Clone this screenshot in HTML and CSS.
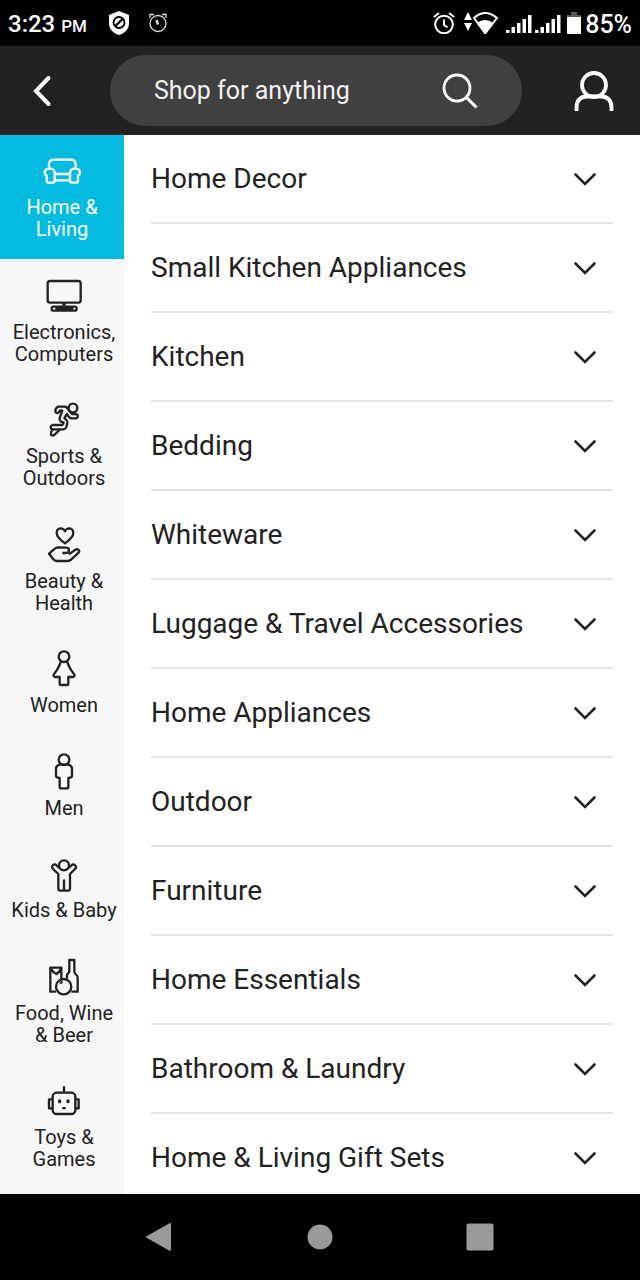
FILE: index.html
```html
<!DOCTYPE html>
<html lang="en">
<head>
<meta charset="utf-8">
<meta name="viewport" content="width=device-width, initial-scale=1">
<title>Shop by category</title>
<link rel="stylesheet" href="styles.css">
</head>
<body>
<svg class="sprite" aria-hidden="true">
  <symbol id="chevron" viewBox="0 0 24 24"><path d="M2.500 7.500 12 17l9.500-9.500" fill="none" stroke="currentColor" stroke-width="2.600" stroke-linecap="round"/></symbol>
  <symbol id="signal" viewBox="0 0 26 20"><path d="M0 15h3.500v3H0zM5.500 12H9v6H5.500zM11 8h3.500v10H11zM16.500 4H20v14h-3.500zM22 0h3.500v18H22z" fill="currentColor"/></symbol>
</svg>

<div class="status">
  <div class="status-group">
    <span class="time">3:23 <small>PM</small></span>
    <svg class="shield" viewBox="0 0 20 24"><path d="M10 0 20 4v8c0 6-4 10-10 12C4 22 0 18 0 12V4z" fill="#fff"/><circle cx="10" cy="11.500" r="5.500" fill="none" stroke="#000" stroke-width="1.800"/><path d="m6.500 15 7-7" stroke="#000" stroke-width="2.400"/></svg>
    <svg class="clock-small" viewBox="0 0 18 20" fill="none" stroke="#ddd" stroke-width="1.300"><circle cx="9" cy="10.500" r="8"/><path d="M1 5V1.500h4M17 5V1.500h-4"/><path d="M9 11.500 7.500 7" stroke-width="2.400"/></svg>
  </div>
  <div class="status-group status-right">
    <svg class="clock" viewBox="0 0 22 22" fill="none" stroke="#fff" stroke-width="2"><circle cx="11" cy="12.500" r="8.800"/><path d="M.8 5 6 1M21.200 5 16 1"/><path d="M11 7.500v5.500l3.500 2.500"/></svg>
    <svg class="wifi" viewBox="0 0 36 22"><path d="m4 0 4 8H0zM0 11h8l-4 8z" fill="#fff"/><path d="M21 21 10 6Q21-4 33 6L21.500 21Z" fill="none" stroke="#fff" stroke-width="2"/><path d="M21 22 12.500 11q8.500-6 17 0z" fill="#fff"/></svg>
    <svg class="signal"><use href="#signal"/></svg>
    <svg class="signal"><use href="#signal"/></svg>
    <svg class="battery" viewBox="0 0 14 22"><path d="M4 0h6v3h4v2H0V3h4z" fill="#555"/><path d="M0 5h14v17H0z" fill="#fff"/></svg>
    <span class="percent">85%</span>
  </div>
</div>

<header class="topbar">
  <button class="back" type="button" aria-label="Back"><svg viewBox="0 0 20 32"><path d="M16.500 3 4 16l12.500 13" fill="none" stroke="#fff" stroke-width="4" stroke-linecap="round"/></svg></button>
  <form class="search">
    <input type="text" placeholder="Shop for anything" aria-label="Shop for anything">
    <button type="submit" aria-label="Search"><svg viewBox="0 0 36 36" fill="none" stroke="#fff" stroke-width="2.800"><circle cx="15" cy="15" r="13"/><path d="m24.500 24.500 10 10" stroke-width="3"/></svg></button>
  </form>
  <button class="account" type="button" aria-label="Account"><svg viewBox="0 0 40 42" fill="none" stroke="#fff" stroke-width="3.800"><circle cx="20" cy="15" r="12"/><path d="M2.500 41v-3q0-11 10-11.500h15q10 .5 10 11.500v3"/></svg></button>
</header>

<main class="shop">
  <nav class="categories" aria-label="Categories">
    <a class="category active" href="#home" aria-current="page">
      <svg viewBox="126 45 120 120"><path d="M147 93v-8q1-14 14-14h52q13 0 14 14v8M164 112q0-14-15-15-15 1-15 13 0 5 6 9v14q0 7 5 7h14q5 0 5-7zM210 112q0-14 15-15 15 1 15 13 0 5-6 9v14q0 7-5 7h-14q-5 0-5-7zM164 114h46M164 133h46"/></svg>
      <span>Home &amp; Living</span></a>
    <a class="category" href="#electronics">
      <svg viewBox="132 418 120 120"><rect x="143" y="433" width="99" height="65" rx="7"/><path d="M192 499v10" stroke-width="10"/><rect x="155" y="510" width="75" height="12" rx="6"/><path d="M166 516h54" stroke-width="12"/></svg>
      <span>Electronics, Computers</span></a>
    <a class="category" href="#sports">
      <svg viewBox="132 30 120 120"><circle cx="219" cy="54" r="13"/><path d="M205 60q-3-10-12-10h-18q-9 4-9 13 1 7 7 6 5-2 7-8l7 1-8 22q-2 6 3 10l9 4-4 7h-29q-8 3-5 10 2 3 7 3h31q6-1 8-7l3-13q1-5-4-9l-5-5 8-12 5 8q3 5 9 5h13q7-2 5-9-2-4-8-4h-9l-11-12"/><path d="M158 118q-8 13-4 17 6 4 12-3l14-14"/></svg>
      <span>Sports &amp; Outdoors</span></a>
    <a class="category" href="#beauty">
      <svg viewBox="132 402 120 120"><path d="M195 457q-25-18-25-31 0-13 12-14 9 0 13 9 4-9 13-9 12 1 12 14 0 13-25 31zM187 486h12q8-1 8-9-1-7-9-7l-24-1q-7 0-13 7l-14 12 13 17q4 5 10 5h32q7 0 12-5l22-20q4-6-1-9-5-3-10 1l-18 13"/></svg>
      <span>Beauty &amp; Health</span></a>
    <a class="category" href="#women">
      <svg viewBox="132 27 120 120"><circle cx="192" cy="50" r="16"/><path d="M183 64q-4 13-13 27l-9 13q-2 6 4 7h14v20q0 4 5 4h16q5 0 5-4v-20h14q6-1 4-7l-9-13q-9-14-13-27"/></svg>
      <span>Women</span></a>
    <a class="category" href="#men">
      <svg viewBox="132 333 120 120"><circle cx="192" cy="356" r="16"/><path d="M180 371q-12 2-12 14v19q0 6 11 7v26q0 5 5 5h16q5 0 5-5v-26q11-1 11-7v-19q0-12-12-14z"/></svg>
      <span>Men</span></a>
    <a class="category" href="#kids">
      <svg viewBox="132 39 120 120"><circle cx="192" cy="73" r="15"/><path d="M178 81l-11-10q-6-3-10 4-2 5 2 9l16 15v43q0 7 6 7h6q5 0 5-6v-25 25q0 6 5 6h7q6 0 6-7V99l15-15q5-4 2-9-4-7-10-4l-11 10"/></svg>
      <span>Kids &amp; Baby</span></a>
    <a class="category" href="#food">
      <svg viewBox="132 345 120 120"><circle cx="191" cy="434" r="23"/><path d="M168 449h-17v-72h33v34M152 379l8 11 9 6 8-6 7-11M201 410v-12l7-9v-35h15v35q1 7 8 12 2 2 2 8v40h-19M181 425q2-5 7-5"/></svg>
      <span>Food, Wine &amp; Beer</span></a>
    <a class="category" href="#toys">
      <svg viewBox="132 90 120 120"><rect x="158" y="125" width="68" height="64" rx="12"/><path d="M192 106v18M156 145h-9v27h9M228 145h8v27h-8"/><path d="M179 150v2M204 150v2" stroke-width="10" stroke-linecap="round"/><path d="M190 171.500h4" stroke-linecap="round"/></svg>
      <span>Toys &amp; Games</span></a>
  </nav>

  <ul class="sections">
    <li><button type="button" aria-expanded="false">Home Decor<svg><use href="#chevron"/></svg></button></li>
    <li><button type="button" aria-expanded="false">Small Kitchen Appliances<svg><use href="#chevron"/></svg></button></li>
    <li><button type="button" aria-expanded="false">Kitchen<svg><use href="#chevron"/></svg></button></li>
    <li><button type="button" aria-expanded="false">Bedding<svg><use href="#chevron"/></svg></button></li>
    <li><button type="button" aria-expanded="false">Whiteware<svg><use href="#chevron"/></svg></button></li>
    <li><button type="button" aria-expanded="false">Luggage &amp; Travel Accessories<svg><use href="#chevron"/></svg></button></li>
    <li><button type="button" aria-expanded="false">Home Appliances<svg><use href="#chevron"/></svg></button></li>
    <li><button type="button" aria-expanded="false">Outdoor<svg><use href="#chevron"/></svg></button></li>
    <li><button type="button" aria-expanded="false">Furniture<svg><use href="#chevron"/></svg></button></li>
    <li><button type="button" aria-expanded="false">Home Essentials<svg><use href="#chevron"/></svg></button></li>
    <li><button type="button" aria-expanded="false">Bathroom &amp; Laundry<svg><use href="#chevron"/></svg></button></li>
    <li><button type="button" aria-expanded="false">Home &amp; Living Gift Sets<svg><use href="#chevron"/></svg></button></li>
  </ul>
</main>

<footer class="system-nav">
  <button type="button" aria-label="System back"><svg viewBox="0 0 30 30"><path d="M25 2v26L2 15z" fill="#999" stroke="#999" stroke-width="2" stroke-linejoin="round"/></svg></button>
  <button type="button" aria-label="System home"><svg viewBox="0 0 30 30"><circle cx="15" cy="15" r="12.500" fill="#999"/></svg></button>
  <button type="button" aria-label="Recent apps"><svg viewBox="0 0 30 30"><rect x="1.500" y="1.500" width="27" height="27" rx="2" fill="#999"/></svg></button>
</footer>
</body>
</html>
```
FILE: styles.css
```css
* { box-sizing: border-box; }

body {
  margin: 0;
  height: 100vh;
  display: flex;
  flex-direction: column;
  background: #fff;
  color: #222;
  font-family: Roboto, "Liberation Sans", sans-serif;
}

button {
  border: 0;
  padding: 0;
  background: none;
  color: inherit;
  font: inherit;
}

svg { display: block; flex: none; }
.sprite { position: absolute; width: 0; height: 0; }

.status {
  flex: none;
  height: 46px;
  padding: 0 8px;
  display: flex;
  align-items: center;
  justify-content: space-between;
  background: #000;
  color: #fff;
}
.status-group { display: flex; align-items: center; }
.time, .percent { padding-top: 4px; font-weight: 500; line-height: 30px; }
.time { font-size: 24px; }
.percent { font-size: 25px; }
.time small { font-size: 17px; }
.shield { width: 20px; height: 24px; margin-left: 22px; }
.clock-small { width: 18px; height: 20px; margin-left: 20px; }
.clock { width: 22px; height: 22px; margin-right: 9px; }
.wifi { width: 36px; height: 22px; margin-right: 6px; }
.signal { width: 26px; height: 20px; margin: 4px 3px 0 0; }
.battery { width: 14px; height: 22px; margin: 0 4px 0 3px; }

.topbar {
  flex: none;
  height: 89px;
  padding: 0 26px 0 32px;
  display: flex;
  align-items: center;
  background: #222;
}
.back svg { width: 20px; height: 32px; }
.search {
  flex: 1;
  min-width: 0;
  height: 71px;
  margin: 0 52px 0 58px;
  padding: 0 44px;
  display: flex;
  align-items: center;
  border-radius: 36px;
  background: #404040;
}
.search input {
  flex: 1;
  min-width: 0;
  height: 40px;
  border: 0;
  padding: 0;
  outline: 0;
  background: none;
  color: #fff;
  font: 25px/40px Roboto, "Liberation Sans", sans-serif;
}
.search input::placeholder { color: #f2f2f2; opacity: 1; }
.search svg { width: 36px; height: 36px; }
.account svg { width: 40px; height: 42px; }

.shop { flex: 1; min-height: 0; display: flex; }

.categories {
  flex: none;
  width: 124px;
  padding-bottom: 5px;
  display: flex;
  flex-direction: column;
  justify-content: space-between;
  background: #f7f7f7;
}
.category {
  padding: 16px 4px 19px 8px;
  display: flex;
  flex-direction: column;
  align-items: center;
  gap: 5px;
  color: #222;
  font-size: 20px;
  line-height: 22px;
  text-align: center;
  text-decoration: none;
}
.category.active { padding-left: 20px; padding-right: 20px; background: #04bbdf; color: #fff; }
.category svg {
  width: 40px;
  height: 40px;
  fill: none;
  stroke: currentColor;
  stroke-width: 7;
  stroke-linejoin: round;
}

.sections {
  flex: 1;
  margin: 0;
  padding: 0 27px;
  list-style: none;
  overflow-y: auto;
  scrollbar-width: none;
}
.sections li { border-bottom: 2px solid #e5e5e5; }
.sections button {
  width: 100%;
  height: 87px;
  padding-right: 16px;
  display: flex;
  align-items: center;
  justify-content: space-between;
  font-size: 28px;
  text-align: left;
}
.sections svg { width: 24px; height: 24px; }

.system-nav {
  flex: none;
  height: 86px;
  padding: 0 80px;
  display: flex;
  align-items: center;
  background: #000;
}
.system-nav button { flex: 1; display: flex; justify-content: center; }
.system-nav svg { width: 30px; height: 30px; }
```
